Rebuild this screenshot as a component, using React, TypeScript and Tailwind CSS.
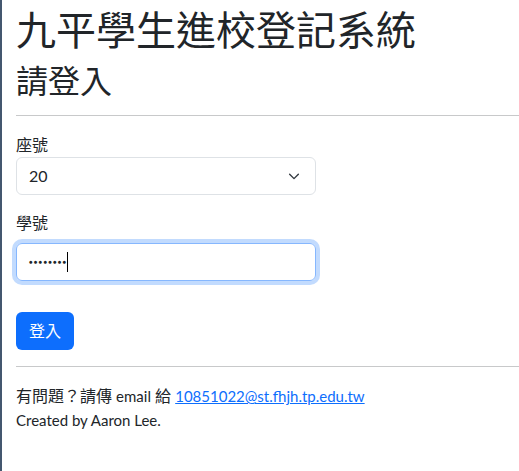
export default function App() {
  return (
    <div className="min-h-[471px] border-l-2 border-[#44576f] bg-white pl-[14px] pt-[6px] text-[16px] leading-6 text-[#212529] [font-family:Lato,'Noto_Sans_CJK_TC',sans-serif]">
      <h1 className="mb-2 text-[40px] font-normal leading-[48px]">九平學生進校登記系統</h1>
      <h2 className="text-[32px] font-normal leading-[38px]">請登入</h2>
      <hr className="mt-[15px] mb-[17px] border-t border-[#c8c9ca]" />

      <label className="block">座號</label>
      <div className="flex h-[38px] w-[300px] items-center justify-between rounded-md border border-[#dee2e6] pl-3 pr-[14px]">
        <span>20</span>
        <svg width="14" height="14" viewBox="0 0 16 16" fill="none">
          <path d="M3 6l5 5 5-5" stroke="#343a40" strokeWidth="1.6" strokeLinecap="round" strokeLinejoin="round" />
        </svg>
      </div>

      <label className="mt-4 block">學號</label>
      <div className="mt-2 flex h-[38px] w-[300px] items-center rounded-md border border-[#86b7fe] pl-3 shadow-[0_0_0_4px_rgba(13,110,253,0.25)]">
        <span className="text-[6px] tracking-[1.2px] text-[#212529]">●●●●●●●●</span>
        <span className="h-[20px] w-px bg-black" />
      </div>

      <button className="mt-[31px] h-[38px] w-[58px] rounded-md bg-[#0d6efd] text-white">登入</button>

      <hr className="mt-[16px] mb-[17px] border-t border-[#c8c9ca]" />

      <p>
        有問題？請傳 <span className="text-[15px]">email</span> 給{' '}
        <a href="#" className="text-[15px] text-[#0d6efd] underline">10851022@st.fhjh.tp.edu.tw</a>
      </p>
      <p className="text-[15px]">Created by Aaron Lee.</p>
    </div>
  );
}
